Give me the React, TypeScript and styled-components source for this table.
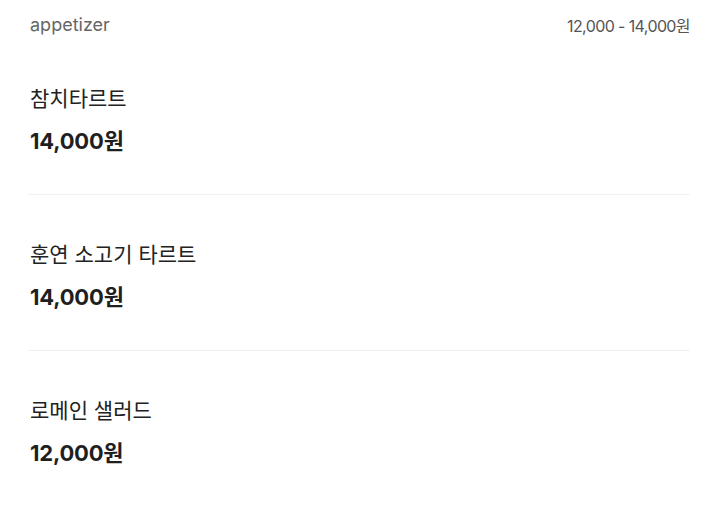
import styled, { createGlobalStyle } from "styled-components"

const GlobalStyle = createGlobalStyle`
  body {
    margin: 0;
    background: #ffffff;
    font-family: Inter, "Noto Sans CJK KR", sans-serif;
  }
`

interface MenuItem {
  name: string
  price: string
}

const items: MenuItem[] = [
  { name: "참치타르트", price: "14,000원" },
  { name: "훈연 소고기 타르트", price: "14,000원" },
  { name: "로메인 샐러드", price: "12,000원" },
]

const Section = styled.section`
  padding: 0 24px 0 28px;
`

const Header = styled.header`
  display: flex;
  justify-content: space-between;
  align-items: center;
  padding-top: 10px;
  height: 29px;
`

const Category = styled.h2`
  margin: 0;
  padding-left: 2px;
  font-size: 18px;
  font-weight: 400;
  letter-spacing: 0;
  color: #666666;
`

const Range = styled.span`
  font-size: 16px;
  letter-spacing: -0.6px;
  color: #555555;
`

const List = styled.ul`
  list-style: none;
  margin: 0;
  padding: 0;
`

const Row = styled.li`
  display: flex;
  flex-direction: column;
  gap: 12px;
  padding: 45px 0 38px 2px;
  border-bottom: 1px solid #f1f1f3;

  &:last-child {
    border-bottom: none;
  }
`

const Name = styled.span`
  font-size: 21px;
  line-height: 30px;
  letter-spacing: 0;
  color: #222222;
`

const Price = styled.span`
  font-size: 22px;
  line-height: 30px;
  font-weight: 700;
  letter-spacing: -0.2px;
  color: #1f1f1f;
`

export default function App() {
  return (
    <>
      <GlobalStyle />
      <Section>
        <Header>
          <Category>appetizer</Category>
          <Range>12,000 - 14,000원</Range>
        </Header>
        <List>
          {items.map((item) => (
            <Row key={item.name}>
              <Name>{item.name}</Name>
              <Price>{item.price}</Price>
            </Row>
          ))}
        </List>
      </Section>
    </>
  )
}
